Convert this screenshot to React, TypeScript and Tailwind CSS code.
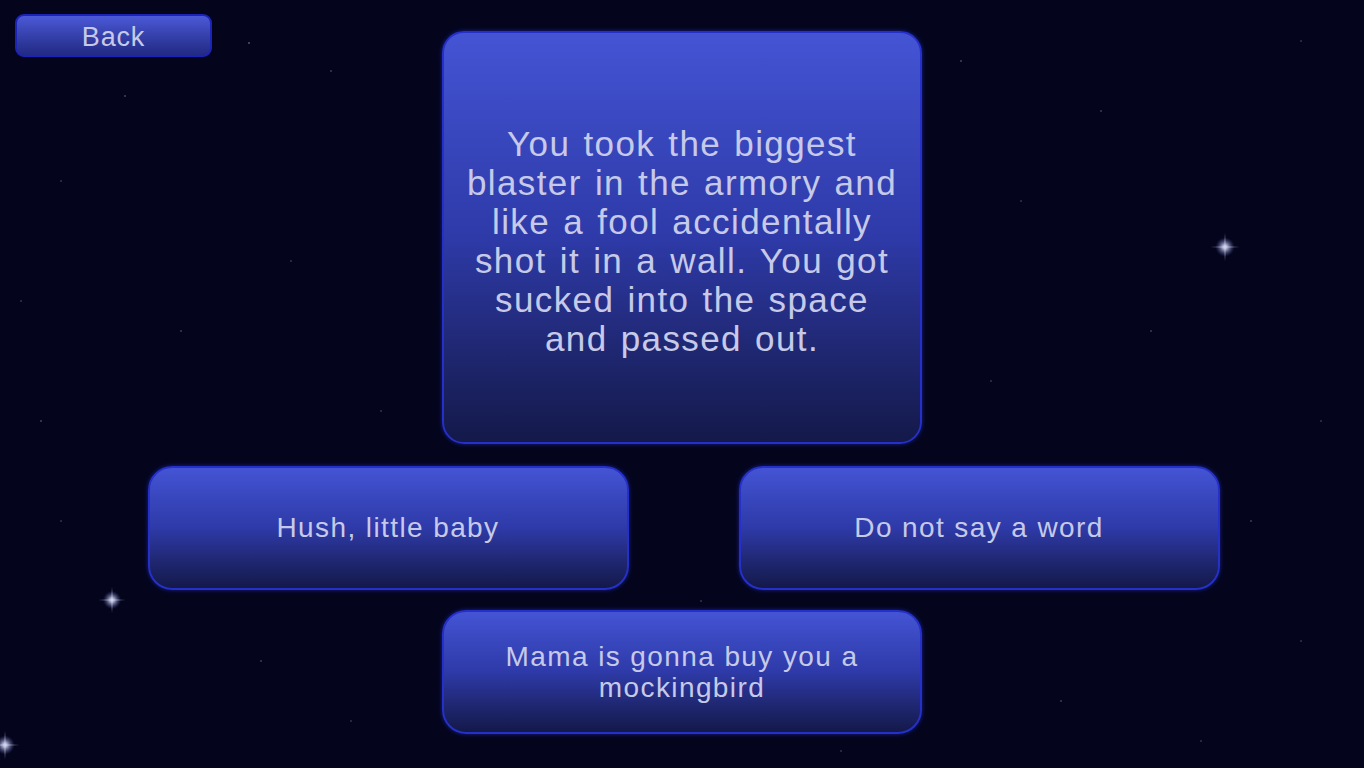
import React from 'react';

const font = { fontFamily: '"Liberation Sans", Arial, sans-serif' };

// tiny background stars: [x, y, opacity]
const dots: [number, number, number][] = [
  [248, 42, 0.5], [124, 95, 0.4], [330, 70, 0.35], [60, 180, 0.3], [290, 260, 0.3],
  [180, 330, 0.35], [380, 410, 0.3], [40, 420, 0.4], [960, 60, 0.4], [1100, 110, 0.35],
  [1300, 40, 0.3], [1020, 200, 0.3], [1150, 330, 0.35], [1320, 420, 0.3], [990, 380, 0.3],
  [1250, 520, 0.35], [1300, 640, 0.3], [1060, 700, 0.35], [260, 660, 0.35], [350, 720, 0.3],
  [60, 520, 0.3], [700, 600, 0.3], [1200, 740, 0.3], [20, 300, 0.3], [840, 750, 0.3],
];

function Sparkle({ x, y, size }: { x: number; y: number; size: number }) {
  return (
    <svg
      className="absolute pointer-events-none"
      style={{ left: x - size / 2, top: y - size / 2 }}
      width={size}
      height={size}
      viewBox="0 0 40 40"
    >
      <defs>
        <radialGradient id={`g${x}${y}`} cx="50%" cy="50%" r="50%">
          <stop offset="0%" stopColor="#ffffff" stopOpacity="1" />
          <stop offset="30%" stopColor="#c9ccf0" stopOpacity="0.75" />
          <stop offset="100%" stopColor="#5058a0" stopOpacity="0" />
        </radialGradient>
      </defs>
      <circle cx="20" cy="20" r="12" fill={`url(#g${x}${y})`} />
      <path d="M20 2 L21 20 L20 38 L19 20 Z" fill="#c8cbef" opacity="0.6" />
      <path d="M2 20 L20 19 L38 20 L20 21 Z" fill="#c8cbef" opacity="0.6" />
    </svg>
  );
}

function Panel({
  className,
  children,
}: {
  className: string;
  children: React.ReactNode;
}) {
  return (
    <div
      className={`flex items-center justify-center text-center text-[#c6cae8] border-2 border-[#2530c8] bg-gradient-to-b from-[#4454d4] via-[#2e3aa8] to-[#141949] shadow-[0_0_4px_rgba(40,50,220,0.6)] ${className}`}
      style={font}
    >
      {children}
    </div>
  );
}

export default function App() {
  return (
    <div className="relative w-full h-[768px] overflow-hidden bg-[#04051d]">
      {dots.map(([x, y, o], i) => (
        <div
          key={i}
          className="absolute w-[2px] h-[2px] rounded-full bg-[#9aa0d8]"
          style={{ left: x, top: y, opacity: o }}
        />
      ))}
      <Sparkle x={1225} y={247} size={32} />
      <Sparkle x={112} y={600} size={30} />
      <Sparkle x={5} y={745} size={32} />

      <div className="relative flex flex-col">
        <div className="grid grid-cols-[1fr_480px_1fr]">
          <div className="pl-[15px] pt-[14px]">
            <button
              className="w-[197px] h-[43px] pt-[3px] rounded-[9px] border-2 border-[#1c24b8] bg-gradient-to-b from-[#4b59d8] to-[#222a82] text-[#c6cae8] text-[27px] leading-none tracking-[0.03em] flex items-center justify-center"
              style={font}
            >
              Back
            </button>
          </div>
          <div className="pt-[31px]">
            <Panel className="h-[413px] rounded-[22px] text-[35px] leading-[39px] tracking-[0.04em] pt-[6px]">
              <p className="[word-spacing:2px]">
                You took the biggest
                <br />
                blaster in the armory and
                <br />
                like a fool accidentally
                <br />
                shot it in a wall. You got
                <br />
                sucked into the space
                <br />
                and passed out.
              </p>
            </Panel>
          </div>
          <div />
        </div>

        <div className="flex justify-center gap-[110px] mt-[22px] pl-[3px]">
          <Panel className="w-[481px] h-[124px] rounded-[24px] text-[28px] tracking-[0.05em]">
            Hush, little baby
          </Panel>
          <Panel className="w-[481px] h-[124px] rounded-[24px] text-[28px] tracking-[0.05em]">
            Do not say a word
          </Panel>
        </div>

        <div className="flex justify-center mt-[20px]">
          <Panel className="w-[480px] h-[124px] rounded-[24px] text-[28px] leading-[31px] tracking-[0.05em]">
            <p>
              Mama is gonna buy you a
              <br />
              mockingbird
            </p>
          </Panel>
        </div>
      </div>
    </div>
  );
}
